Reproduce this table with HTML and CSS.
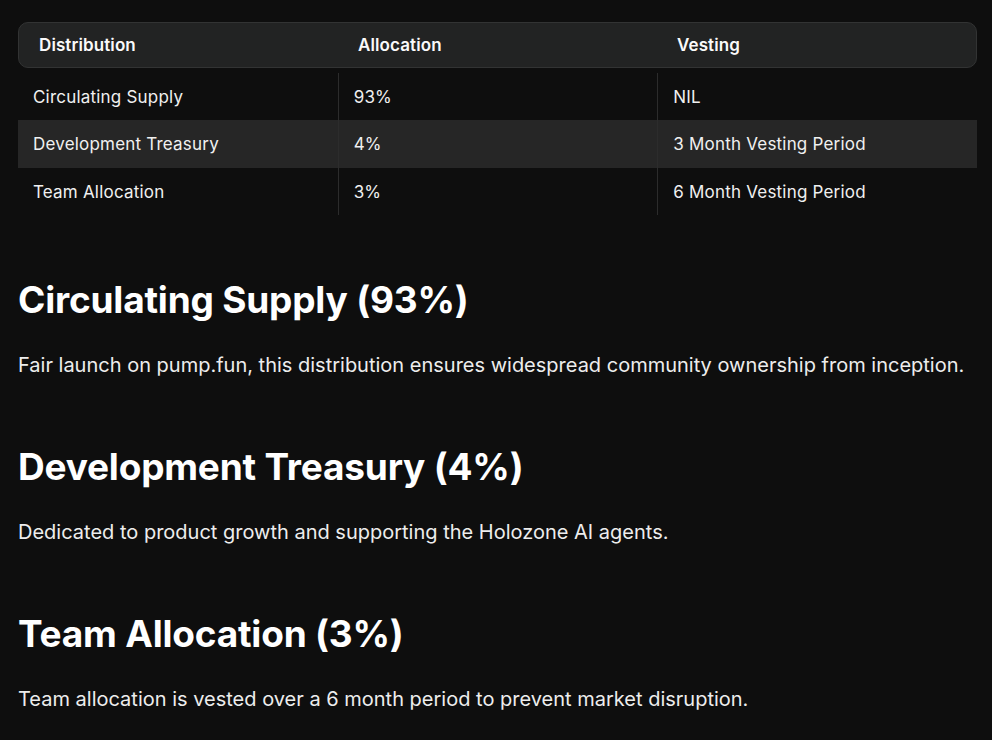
FILE: index.html
```html
<!DOCTYPE html>
<html lang="en">
<head>
<meta charset="utf-8">
<title>Tokenomics</title>
<link rel="stylesheet" href="styles.css">
</head>
<body>
<main class="page">
  <div class="table">
    <div class="thead">
      <div class="th">Distribution</div>
      <div class="th">Allocation</div>
      <div class="th">Vesting</div>
    </div>
    <div class="tbody">
      <div class="tr">
        <div class="td">Circulating Supply</div>
        <div class="td">93%</div>
        <div class="td">NIL</div>
      </div>
      <div class="tr tr-alt">
        <div class="td">Development Treasury</div>
        <div class="td">4%</div>
        <div class="td">3 Month Vesting Period</div>
      </div>
      <div class="tr">
        <div class="td">Team Allocation</div>
        <div class="td">3%</div>
        <div class="td">6 Month Vesting Period</div>
      </div>
    </div>
  </div>

  <section class="block">
    <h2>Circulating Supply (93%)</h2>
    <p>Fair launch on pump.fun, this distribution ensures widespread community ownership from inception.</p>
  </section>
  <section class="block">
    <h2>Development Treasury (4%)</h2>
    <p>Dedicated to product growth and supporting the Holozone AI agents.</p>
  </section>
  <section class="block">
    <h2>Team Allocation (3%)</h2>
    <p>Team allocation is vested over a 6 month period to prevent market disruption.</p>
  </section>
</main>
</body>
</html>
```
FILE: styles.css
```css
html, body {
  margin: 0;
  padding: 0;
  background: #0e0e0e;
  color: #f5f5f5;
  font-family: Inter, "Noto Sans", "Liberation Sans", sans-serif;
}
.page {
  padding: 22px 15px 40px 18px;
}
.table {
  width: 959px;
}
.thead {
  display: grid;
  grid-template-columns: 1fr 1fr 1fr;
  height: 46px;
  align-items: center;
  background: #222323;
  border: 1px solid #323333;
  border-radius: 10px;
  box-sizing: border-box;
}
.th {
  padding-left: 20px;
  font-size: 17px;
  font-weight: 600;
  letter-spacing: 0.1px;
  color: #fafafa;
}
.tbody {
  margin-top: 5px;
}
.tr {
  display: grid;
  grid-template-columns: 1fr 1fr 1fr;
  height: 47px;
  align-items: stretch;
}
.tr-alt {
  height: 48px;
  background: #262626;
}
.td {
  display: flex;
  align-items: center;
  padding-left: 15px;
  font-size: 17px;
  letter-spacing: 0.2px;
  color: #f0f0f0;
}
.td + .td {
  border-left: 1px solid #2c2c2c;
}
h2 {
  margin: 63px 0 0;
  font-size: 37px;
  font-weight: 700;
  line-height: 44px;
  letter-spacing: -0.2px;
  color: #ffffff;
}
p {
  margin: 28px 0 0;
  font-size: 20px;
  line-height: 30px;
  color: #ededed;
}
.block + .block h2 {
  margin-top: 65px;
}
```
